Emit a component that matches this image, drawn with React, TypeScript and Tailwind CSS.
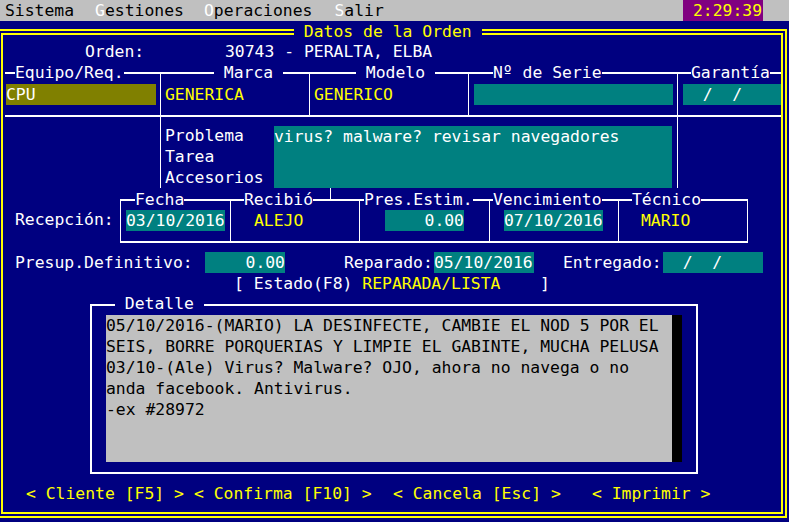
export default function App() {
  return (
    <div className="w-[789px] h-[522px] overflow-hidden bg-[#000080] font-['DejaVu_Sans_Mono','Liberation_Mono',monospace] text-[16.4px] leading-[21px] text-white relative whitespace-pre flex flex-col">
      {/* menu bar */}
      <div className="h-[21px] shrink-0 bg-[#c0c0c0] flex text-black">
        <span className="ml-[5px]">Sistema</span>
        <span className="ml-[21px]"><span className="text-white">G</span>estiones</span>
        <span className="ml-[20px]"><span className="text-white">O</span>peraciones</span>
        <span className="ml-[22px]"><span className="text-white">S</span>alir</span>
        <span className="ml-auto mr-[26px] w-[80px] bg-[#800080] text-[#ffff00] pl-[10px]">2:29:39</span>
      </div>

      {/* double frame */}
      <div className="mt-[8px] -ml-[10px] w-[797px] h-[489px] shrink-0 border-2 border-[#ffff00]">
        <div className="mt-[2px] ml-[9px] w-[782px] h-[481px] border-2 border-[#ffff00] flex flex-col">
          {/* Orden */}
          <div className="mt-[6px] h-[21px] shrink-0 flex">
            <span className="ml-[82px] w-[140px]">Orden:</span>
            <span>30743 - PERALTA, ELBA</span>
          </div>

          {/* Equipo / Marca / Modelo / Serie / Garantia */}
          <div className="mt-[10px] ml-[2px] w-[776px] h-[45px] shrink-0 flex border-y-2 border-white">
            <div className="w-[155px] shrink-0 flex flex-col">
              <div className="-mt-[12px] h-[21px] flex"><span className="ml-[10px] bg-[#000080]">Equipo/Req.</span></div>
              <div className="mt-[1px] h-[21px] flex"><span className="ml-[1px] w-[150px] bg-[#808000]">CPU</span></div>
            </div>
            <div className="w-[149px] shrink-0 flex flex-col border-l border-white">
              <div className="-mt-[12px] h-[21px] flex"><span className="ml-[53px] bg-[#000080]"> Marca </span></div>
              <div className="mt-[1px] h-[21px] flex"><span className="ml-[4px] text-[#ffff00]">GENERICA</span></div>
            </div>
            <div className="w-[159px] shrink-0 flex flex-col border-l border-white">
              <div className="-mt-[12px] h-[21px] flex"><span className="ml-[46px] bg-[#000080]"> Modelo </span></div>
              <div className="mt-[1px] h-[21px] flex"><span className="ml-[4px] text-[#ffff00]">GENERICO</span></div>
            </div>
            <div className="w-[209px] shrink-0 flex flex-col border-l border-white">
              <div className="-mt-[12px] h-[21px] flex"><span className="ml-[24px] bg-[#000080]">Nº de Serie</span></div>
              <div className="mt-[1px] h-[21px] flex"><span className="ml-[5px] w-[199px] bg-[#008080]"></span></div>
            </div>
            <div className="w-[104px] shrink-0 flex flex-col border-l border-white">
              <div className="-mt-[12px] h-[21px] flex"><span className="ml-[13px] bg-[#000080]">Garantía</span></div>
              <div className="mt-[1px] h-[21px] flex"><span className="ml-[5px] w-[98px] shrink-0 bg-[#008080]">  /  /</span></div>
            </div>
          </div>

          {/* Problema / Tarea / Accesorios */}
          <div className="ml-[157px] w-[518px] h-[71px] shrink-0 border-x border-white flex pt-[8px]">
            <div className="ml-[4px] w-[109px] shrink-0 flex flex-col">
              <span>Problema</span>
              <span>Tarea</span>
              <span>Accesorios</span>
            </div>
            <div className="mt-[1px] w-[398px] h-[62px] shrink-0 bg-[#008080]">virus? malware? revisar navegadores</div>
          </div>
          <div className="h-[11px] shrink-0 flex">
            <div className="ml-[327px] w-px bg-white" />
          </div>

          {/* Recepcion */}
          <div className="h-[44px] shrink-0 flex">
            <span className="ml-[12px] mt-[10px] w-[105px] h-[21px] shrink-0">Recepción:</span>
            <div className="w-[628px] shrink-0 flex border-y-2 border-r border-white">
              <div className="w-[110px] shrink-0 flex flex-col border-l border-white">
                <div className="-mt-[12px] h-[21px] flex"><span className="ml-[14px] bg-[#000080]">Fecha</span></div>
                <div className="h-[21px] flex"><span className="ml-[5px] w-[99px] bg-[#008080]">03/10/2016</span></div>
              </div>
              <div className="w-[129px] shrink-0 flex flex-col border-l border-white">
                <div className="-mt-[12px] h-[21px] flex"><span className="ml-[13px] bg-[#000080]">Recibió</span></div>
                <div className="h-[21px] flex"><span className="ml-[23px] text-[#ffff00]">ALEJO</span></div>
              </div>
              <div className="w-[130px] shrink-0 flex flex-col border-l border-white">
                <div className="-mt-[12px] h-[21px] flex"><span className="ml-[4px] bg-[#000080]">Pres.Estim.</span></div>
                <div className="h-[21px] flex"><span className="ml-[25px] w-[79px] bg-[#008080] text-right">0.00</span></div>
              </div>
              <div className="w-[129px] shrink-0 flex flex-col border-l border-white">
                <div className="-mt-[12px] h-[21px] flex"><span className="ml-[3px] bg-[#000080]">Vencimiento</span></div>
                <div className="h-[21px] flex"><span className="ml-[14px] w-[99px] bg-[#008080]">07/10/2016</span></div>
              </div>
              <div className="w-[129px] shrink-0 flex flex-col border-l border-white">
                <div className="-mt-[12px] h-[21px] flex"><span className="ml-[13px] bg-[#000080]">Técnico</span></div>
                <div className="h-[21px] flex"><span className="ml-[22px] text-[#ffff00]">MARIO</span></div>
              </div>
            </div>
          </div>

          {/* Presupuesto / Reparado / Entregado */}
          <div className="mt-[9px] h-[21px] shrink-0 flex">
            <span className="ml-[12px] w-[190px] shrink-0">Presup.Definitivo:</span>
            <span className="w-[80px] shrink-0 bg-[#008080] text-right">0.00</span>
            <span className="ml-[59px] w-[90px] shrink-0">Reparado:</span>
            <span className="w-[100px] shrink-0 bg-[#008080]">05/10/2016</span>
            <span className="ml-[29px] w-[100px] shrink-0">Entregado:</span>
            <span className="w-[100px] shrink-0 bg-[#008080]">  /  /</span>
          </div>

          {/* Estado */}
          <div className="h-[21px] shrink-0 flex">
            <span className="ml-[231px]">[ Estado(F8) <span className="text-[#ffff00]">REPARADA/LISTA</span>    ]</span>
          </div>

          {/* Detalle */}
          <div className="mt-[10px] ml-[87px] w-[608px] h-[170px] shrink-0 border-2 border-white flex flex-col">
            <div className="-mt-[13px] h-[21px] shrink-0 flex"><span className="ml-[23px] bg-[#000080]"> Detalle </span></div>
            <div className="mt-[1px] ml-[14px] w-[576px] h-[147px] shrink-0 flex">
              <div className="flex-1 bg-[#c0c0c0] text-black flex flex-col">
                <span>05/10/2016-(MARIO) LA DESINFECTE, CAMBIE EL NOD 5 POR EL</span>
                <span>SEIS, BORRE PORQUERIAS Y LIMPIE EL GABINTE, MUCHA PELUSA</span>
                <span>03/10-(Ale) Virus? Malware? OJO, ahora no navega o no</span>
                <span>anda facebook. Antivirus.</span>
                <span>-ex #28972</span>
              </div>
              <div className="w-[10px] bg-black" />
            </div>
          </div>

          {/* buttons */}
          <div className="mt-[9px] h-[21px] shrink-0 flex text-[#ffff00]">
            <span className="ml-[23px] w-[168px] shrink-0">{"< Cliente [F5] >"}</span>
            <span className="w-[199px] shrink-0">{"< Confirma [F10] >"}</span>
            <span className="w-[199px] shrink-0">{"< Cancela [Esc] >"}</span>
            <span>{"< Imprimir >"}</span>
          </div>
        </div>
      </div>

      {/* frame title */}
      <div className="absolute left-[294px] top-[21px] h-[21px] bg-[#000080] text-[#ffff00]"> Datos de la Orden </div>
    </div>
  );
}
